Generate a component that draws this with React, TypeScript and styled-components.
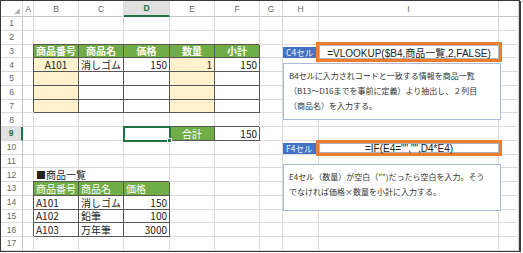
import React from 'react';
import styled, { createGlobalStyle, css } from 'styled-components';

const GlobalStyle = createGlobalStyle`
  html, body {
    margin: 0;
    padding: 0;
    background: #fff;
  }
  body {
    font-family: "Noto Sans CJK JP", "Liberation Sans", sans-serif;
  }
`;

const COLS = ['A', 'B', 'C', 'D', 'E', 'F', 'G', 'H', 'I', 'J'];
const COL_WIDTHS = [11, 45, 45, 46, 45, 45, 23, 36, 180, 20];
const ROW_COUNT = 17;
const ROW_H = 13.75;
const ACTIVE_COL = 'D';
const ACTIVE_ROW = 9;

const GRID = '#dadada';
const DARK = '#575757';
const GREEN = '#70ad47';
const EXCEL_GREEN = '#217346';

type Kind = 'plain' | 'head' | 'listHead' | 'input' | 'total' | 'active';
type Align = 'left' | 'center' | 'right';

interface CellDef {
  text?: string;
  kind?: Kind;
  align?: Align;
  boxed?: boolean;
}

const box = (text: string, kind: Kind = 'plain', align: Align = 'left'): CellDef => ({
  text,
  kind,
  align,
  boxed: true,
});

// sheet contents, keyed by cell address
const cells: Record<string, CellDef> = {
  B3: box('商品番号', 'head', 'center'),
  C3: box('商品名', 'head', 'center'),
  D3: box('価格', 'head', 'center'),
  E3: box('数量', 'head', 'center'),
  F3: box('小計', 'head', 'center'),
  B4: box('A101', 'input', 'center'),
  C4: box('消しゴム', 'plain', 'center'),
  D4: box('150', 'plain', 'right'),
  E4: box('1', 'input', 'right'),
  F4: box('150', 'plain', 'right'),
  D9: { kind: 'active' },
  E9: box('合計', 'total', 'center'),
  F9: box('150', 'plain', 'right'),
  B12: { text: '■商品一覧' },
  B13: box('商品番号', 'listHead'),
  C13: box('商品名', 'listHead'),
  D13: box('価格', 'listHead'),
  B14: box('A101'),
  C14: box('消しゴム'),
  D14: box('150', 'plain', 'right'),
  B15: box('A102'),
  C15: box('鉛筆'),
  D15: box('100', 'plain', 'right'),
  B16: box('A103'),
  C16: box('万年筆'),
  D16: box('3000', 'plain', 'right'),
};

[5, 6, 7].forEach((r) => {
  cells[`B${r}`] = box('', 'input');
  cells[`C${r}`] = box('');
  cells[`D${r}`] = box('');
  cells[`E${r}`] = box('', 'input');
  cells[`F${r}`] = box('');
});

const Frame = styled.div`
  position: relative;
  width: 518px;
  height: ${16 + ROW_COUNT * ROW_H}px;
  border: 1px solid #3a3a3a;
  box-shadow: 1px 1px 0 #3a3a3a;
  overflow: hidden;
  background: #fff;
`;

const Sheet = styled.div`
  display: grid;
  grid-template-columns: 22px ${COL_WIDTHS.map((w) => `${w}px`).join(' ')};
  grid-template-rows: 16px repeat(${ROW_COUNT}, ${ROW_H}px);
`;

const Corner = styled.div`
  position: relative;
  border-right: 1px solid ${GRID};
  border-bottom: 1px solid #c6c6c6;
  box-sizing: border-box;

  &::after {
    content: '';
    position: absolute;
    right: 2px;
    bottom: 2px;
    border-style: solid;
    border-width: 0 0 6px 6px;
    border-color: transparent transparent #b8b8b8 transparent;
  }
`;

const ColHead = styled.div<{ $selected?: boolean }>`
  box-sizing: border-box;
  display: flex;
  align-items: center;
  justify-content: center;
  font-family: "Liberation Sans", sans-serif;
  font-size: 8.5px;
  color: #666;
  border-right: 1px solid ${GRID};
  border-bottom: 1px solid #c6c6c6;

  ${(p) =>
    p.$selected &&
    css`
      background: #e1e1e1;
      color: ${EXCEL_GREEN};
      font-weight: bold;
      border-bottom: 2px solid ${EXCEL_GREEN};
    `}
`;

const RowHead = styled.div<{ $selected?: boolean }>`
  box-sizing: border-box;
  display: flex;
  align-items: center;
  justify-content: center;
  font-family: "Liberation Sans", sans-serif;
  font-size: 8.5px;
  color: #666;
  border-right: 1px solid #c6c6c6;
  border-bottom: 1px solid ${GRID};

  ${(p) =>
    p.$selected &&
    css`
      background: #e1e1e1;
      color: ${EXCEL_GREEN};
      font-weight: bold;
      border-right: 2px solid ${EXCEL_GREEN};
    `}
`;

const kindStyles: Record<Kind, ReturnType<typeof css> | string> = {
  plain: '',
  head: css`
    background: ${GREEN};
    color: #fff;
    font-weight: bold;
  `,
  listHead: css`
    background: ${GREEN};
    color: #fff;
  `,
  input: css`
    background: #fff2cc;
  `,
  total: css`
    background: ${GREEN};
    color: #fff;
  `,
  active: css`
    position: relative;
    z-index: 1;
    outline: 2px solid ${EXCEL_GREEN};
    outline-offset: -1px;

    &::after {
      content: '';
      position: absolute;
      right: -3px;
      bottom: -3px;
      width: 3px;
      height: 3px;
      background: ${EXCEL_GREEN};
      border: 1px solid #fff;
    }
  `,
};

const Cell = styled.div<{ $kind: Kind; $align: Align; $boxed?: boolean }>`
  box-sizing: border-box;
  display: flex;
  align-items: center;
  justify-content: ${(p) =>
    p.$align === 'right' ? 'flex-end' : p.$align === 'center' ? 'center' : 'flex-start'};
  padding: 0 2px;
  font-size: 10px;
  color: #222;
  white-space: nowrap;
  border-right: 1px solid ${GRID};
  border-bottom: 1px solid ${GRID};

  ${(p) =>
    p.$boxed &&
    css`
      border-right-color: ${DARK};
      border-bottom-color: ${DARK};
      box-shadow: -1px -1px 0 ${DARK};
    `}

  ${(p) => kindStyles[p.$kind]}
`;

const Callout = styled.div<{ $top: number; $gap: number }>`
  position: absolute;
  left: 282px;
  top: ${(p) => p.$top}px;
  z-index: 2;
  display: flex;
  flex-direction: column;
  gap: ${(p) => p.$gap}px;
`;

const FormulaRow = styled.div`
  display: flex;
  align-items: center;
`;

const CellTag = styled.div`
  width: 33px;
  height: 11px;
  box-sizing: border-box;
  padding-left: 3px;
  background: #4472c4;
  color: #eef2fa;
  font-size: 8.5px;
  line-height: 11px;
  white-space: nowrap;
`;

const Formula = styled.div<{ $h: number }>`
  width: 186px;
  height: ${(p) => p.$h}px;
  box-sizing: border-box;
  display: flex;
  align-items: center;
  justify-content: center;
  border: 3px solid #ed7d31;
  background: #fff;
  box-shadow: inset 0 0 0 1px #b5b5b5;
  font-family: "Liberation Sans", "Noto Sans CJK JP", sans-serif;
  font-size: 10px;
  color: #222;
  white-space: nowrap;
`;

const Note = styled.div<{ $h: number }>`
  width: 218px;
  height: ${(p) => p.$h}px;
  box-sizing: border-box;
  padding: 4px 5px;
  border: 1px solid #a9bbd6;
  background: #fff;
  font-size: 8px;
  line-height: 15px;
  color: #333;
  white-space: nowrap;
`;

const App = () => {
  const rows = Array.from({ length: ROW_COUNT }, (_, i) => i + 1);

  return (
    <>
      <GlobalStyle />
      <Frame>
        <Sheet>
          <Corner />
          {COLS.map((c) => (
            <ColHead key={c} $selected={c === ACTIVE_COL}>
              {c === 'J' ? '' : c}
            </ColHead>
          ))}
          {rows.map((r) => (
            <React.Fragment key={r}>
              <RowHead $selected={r === ACTIVE_ROW}>{r}</RowHead>
              {COLS.map((c) => {
                const def = cells[`${c}${r}`] || {};
                return (
                  <Cell
                    key={c + r}
                    $kind={def.kind || 'plain'}
                    $align={def.align || 'left'}
                    $boxed={def.boxed}
                  >
                    {def.text}
                  </Cell>
                );
              })}
            </React.Fragment>
          ))}
        </Sheet>

        <Callout $top={41} $gap={1}>
          <FormulaRow>
            <CellTag>C4セル</CellTag>
            <Formula $h={20}>=VLOOKUP($B4,商品一覧,2,FALSE)</Formula>
          </FormulaRow>
          <Note $h={57}>
            B4セルに入力されコードと一致する情報を商品一覧
            <br />
            （B13～D16までを事前に定義）より抽出し、２列目
            <br />
            （商品名）を入力する。
          </Note>
        </Callout>

        <Callout $top={139} $gap={8}>
          <FormulaRow>
            <CellTag>F4セル</CellTag>
            <Formula $h={16}>=IF(E4="","",D4*E4)</Formula>
          </FormulaRow>
          <Note $h={47}>
            E4セル（数量）が空白（"")だったら空白を入力。そう
            <br />
            でなければ価格×数量を小計に入力する。
          </Note>
        </Callout>
      </Frame>
    </>
  );
};

export default App;
